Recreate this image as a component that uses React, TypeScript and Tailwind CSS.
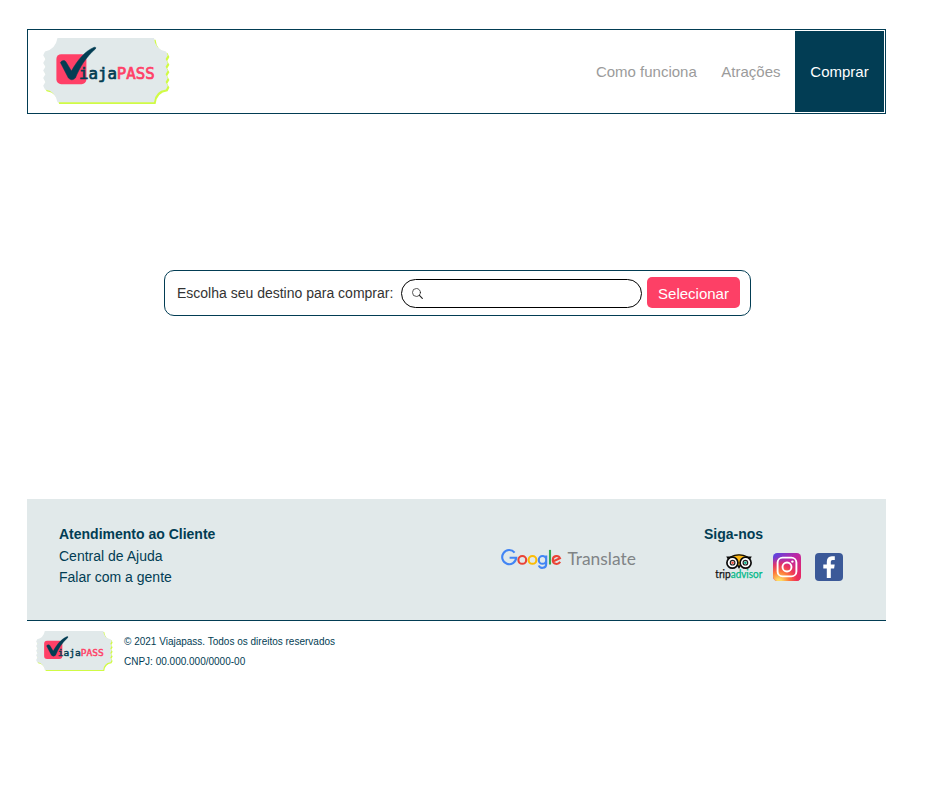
import React from "react";

const toothX = [2, 0.2, 2.4, 0.2, 2.4, 0.2, 2.4, 0.2, 2.4, 0.2, 2];

function ticketPath() {
  const top = 13.5;
  const step = 38 / 10;
  const right = toothX.map((v, i) => `L${125 - v} ${top + i * step}`).join(" ");
  const left = toothX.map((v, i) => `L${v} ${top + (10 - i) * step}`).join(" ");
  return `M14.5 0 H111 Q112 11.5 ${123} 13.5 ${right} Q112 53 111 64.2 H14.5 Q12.5 53 2 51.5 ${left} Q12.5 11.5 14.5 0 Z`;
}

function Logo({ className }: { className: string }) {
  const d = ticketPath();
  return (
    <svg viewBox="0 0 127 66" className={className} role="img" aria-label="ViajaPASS">
      <path d={d} fill="#d0fb45" transform="translate(1.6 1.8)" />
      <path d={d} fill="#e1e9ea" />
      <rect x="13.4" y="16.2" width="30" height="30" rx="4.8" fill="#ff4067" />
      <g fontFamily="'DejaVu Sans Mono', monospace" fontWeight="400" fontSize="15.6" strokeWidth="0.7">
        <text x="35.9" y="40.8" fill="#033d53" stroke="#033d53" textLength="38" lengthAdjust="spacingAndGlyphs">iaja</text>
        <text x="73.7" y="40.8" fill="#ff4067" stroke="#ff4067" textLength="38" lengthAdjust="spacingAndGlyphs">PASS</text>
      </g>
      <path
        d="M17.4 24.6 C18.6 22.2 22 21.8 23.2 24.2 L28.4 33 C34.6 22 42 13 51.2 9.2 Q53.8 8.8 52.4 11 C43 19 36.6 29.6 32.4 40 Q28.8 43.6 25.4 40 Z"
        fill="#033d53"
        stroke="#033d53"
        strokeWidth="0.5"
      />
    </svg>
  );
}

function GoogleTranslate() {
  return (
    <svg width="140" height="26" viewBox="0 0 140 26" role="img" aria-label="Google Translate">
      <g fill="none" strokeWidth="2.1">
        <path d="M13.6 5.6 A7 7.1 0 1 0 15.2 10.7 H8.6" stroke="#4285f4" />
        <circle cx="21.3" cy="12.9" r="3.9" stroke="#ea4335" />
        <circle cx="31.5" cy="12.9" r="3.9" stroke="#fbbc05" />
        <path d="M45.2 8.6 V16.9 C45.2 21.7 39 22 37.8 18.5 M45.2 12.9 A3.7 3.9 0 1 1 37.8 12.9 A3.7 3.9 0 1 1 45.2 12.9" stroke="#4285f4" />
        <path d="M49 2.9 V17.5" stroke="#34a853" />
        <path d="M52.4 14.2 L59 11.3 C57.7 7.9 51.8 8.3 51.8 12.9 C51.8 17.5 57 18.1 59.2 14.9" stroke="#ea4335" />
      </g>
      <text x="66.4" y="17.8" fontFamily="Lato, sans-serif" fontSize="17.2" fill="#808486" textLength="68.5" lengthAdjust="spacingAndGlyphs">
        Translate
      </text>
    </svg>
  );
}

function TripAdvisor() {
  return (
    <svg width="48" height="30" viewBox="0 0 48 30" role="img" aria-label="tripadvisor">
      <path d="M14.8 3.8 Q24 -1.4 33.2 3.8 L24 14 Z" fill="#fdb813" />
      <path d="M11.2 3.4 H15 Q24 -1 33 3.4 H36.8 L35.4 6 L32.5 4.4 Q24 0.8 15.5 4.4 L12.6 6 Z" fill="#0b0b0b" />
      <path d="M21.8 12.2 L24 16 L26.2 12.2 Z" fill="#0b0b0b" />
      <g fill="#fff" stroke="#0b0b0b" strokeWidth="1.7">
        <circle cx="17.4" cy="9.7" r="5.5" />
        <circle cx="30.6" cy="9.7" r="5.5" />
      </g>
      <circle cx="17.6" cy="9.7" r="2.3" fill="#fff" stroke="#222" strokeWidth="1.2" />
      <circle cx="30.4" cy="9.7" r="2.3" fill="#fff" stroke="#222" strokeWidth="1.2" />
      <circle cx="17.6" cy="9.7" r="1.3" fill="#ee4a36" />
      <circle cx="30.4" cy="9.7" r="1.3" fill="#00af87" />
      <g fontFamily="Lato, sans-serif" fontSize="10.6" strokeWidth="0.25">
        <text x="0.3" y="25" fill="#111" stroke="#111" textLength="15.4" lengthAdjust="spacingAndGlyphs">trip</text>
        <text x="15.7" y="25" fill="#00b887" stroke="#00b887" textLength="31.6" lengthAdjust="spacingAndGlyphs">advisor</text>
      </g>
    </svg>
  );
}

function Instagram() {
  return (
    <svg width="28" height="28" viewBox="0 0 28 28" role="img" aria-label="Instagram">
      <defs>
        <linearGradient id="ig-base" x1="0.1" y1="0" x2="0.9" y2="0.9">
          <stop offset="0" stopColor="#5b45e0" />
          <stop offset="0.45" stopColor="#bd27a5" />
          <stop offset="1" stopColor="#e9275c" />
        </linearGradient>
        <radialGradient id="ig-glow" cx="0.22" cy="1.03" r="0.9">
          <stop offset="0.1" stopColor="#ffdc62" />
          <stop offset="0.4" stopColor="#fd7b3b" />
          <stop offset="0.7" stopColor="#f33453" stopOpacity="0.8" />
          <stop offset="1" stopColor="#d52b8b" stopOpacity="0" />
        </radialGradient>
      </defs>
      <rect width="28" height="28" rx="4.2" fill="url(#ig-base)" />
      <rect width="28" height="28" rx="4.2" fill="url(#ig-glow)" />
      <g fill="none" stroke="#fff" strokeWidth="1.9">
        <rect x="4.6" y="4.6" width="18.8" height="18.8" rx="5" />
        <circle cx="14" cy="14" r="4.5" />
      </g>
      <circle cx="19.4" cy="8.6" r="1.2" fill="#fff" />
    </svg>
  );
}

function Facebook() {
  return (
    <svg width="28" height="28" viewBox="0 0 28 28" role="img" aria-label="Facebook">
      <rect width="28" height="28" rx="4" fill="#3b5998" />
      <path d="M11.8 25 V15.5 H8.3 V11.6 H11.8 V8.7 Q11.8 3.4 16.8 3.2 H19.8 V7 H17.5 Q15.8 7 15.8 8.8 V11.6 H19.7 L19.1 15.5 H15.8 V25 Z" fill="#fff" />
    </svg>
  );
}

export default function App() {
  return (
    <div className="min-h-[807px] w-[926px] bg-white pt-[29px] pl-[27px] font-['Liberation_Sans',Arial,sans-serif] text-[#023d54]">
      <header className="flex h-[85px] w-[859px] items-center justify-between border border-[#023d54] p-px pl-[15px]">
        <Logo className="mb-[1px] h-[66px] w-[127px]" />
        <nav className="flex h-full items-center text-[15px] text-[#9b9b9b]">
          <a className="mr-[24.5px] pt-[2px]">Como funciona</a>
          <a className="mr-[14.5px] pt-[2px]">Atrações</a>
          <a className="flex h-full w-[89px] items-center justify-center bg-[#023d54] pt-[2px] text-white">Comprar</a>
        </nav>
      </header>

      <main className="pt-[156px] pl-[137px]">
        <form className="flex h-[46px] w-[587px] items-center rounded-[10px] border border-[#023d54] pl-3">
          <label className="w-[224px] text-sm whitespace-nowrap text-[#333]">Escolha seu destino para comprar:</label>
          <div className="flex h-[29px] w-[241px] items-center rounded-full border border-black pl-[10px]">
            <svg width="11" height="11" viewBox="0 0 16 16" fill="none" stroke="#222" strokeLinecap="round">
              <circle cx="6.5" cy="6.5" r="5.8" strokeWidth="1.1" />
              <path d="M10.8 10.8 L15 15" strokeWidth="1.7" />
            </svg>
          </div>
          <button type="button" className="mb-[2px] ml-[5px] flex h-[31px] w-[93px] items-center justify-center rounded-[5px] bg-[#fd4066] pt-[4px] text-[15px] text-white">
            Selecionar
          </button>
        </form>
      </main>

      <footer className="mt-[183px] w-[859px]">
        <div className="flex h-[122px] border-b border-[#023d54] bg-[#e1e9ea] pl-8">
          <div className="w-[442px] pt-[25px] text-sm leading-[21.5px]">
            <h2 className="font-bold">Atendimento ao Cliente</h2>
            <p>Central de Ajuda</p>
            <p>Falar com a gente</p>
          </div>
          <div className="w-[203px] pt-12">
            <GoogleTranslate />
          </div>
          <div className="pt-[25px]">
            <h2 className="text-sm leading-[21px] font-bold">Siga-nos</h2>
            <div className="mt-2 flex pl-[11px]">
              <TripAdvisor />
              <span className="ml-[10px]"><Instagram /></span>
              <span className="ml-[14px]"><Facebook /></span>
            </div>
          </div>
        </div>
        <div className="flex pt-[10px] pl-[9px]">
          <Logo className="h-[40px] w-[77px]" />
          <div className="ml-[11px] pt-px text-[10px] leading-5">
            <p>© 2021 Viajapass. Todos os direitos reservados</p>
            <p>CNPJ: 00.000.000/0000-00</p>
          </div>
        </div>
      </footer>
    </div>
  );
}
